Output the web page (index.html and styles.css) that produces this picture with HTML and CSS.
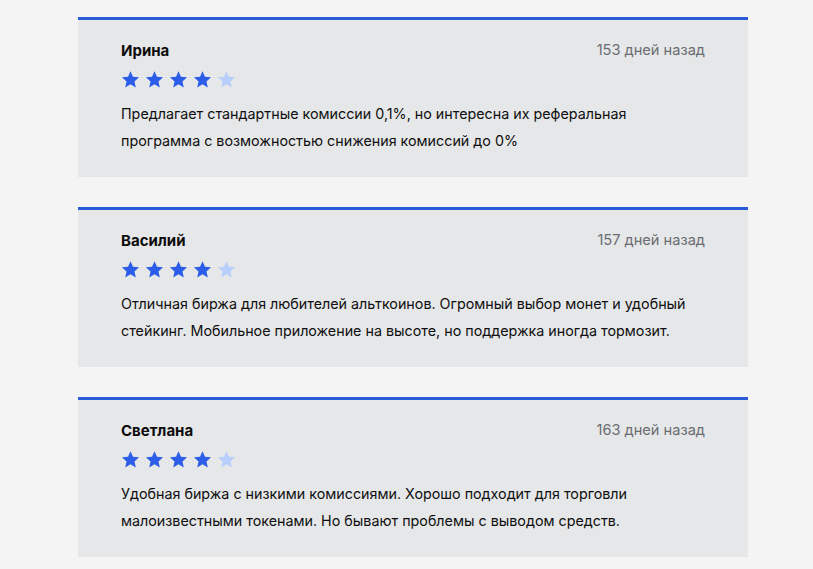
FILE: index.html
```html
<!DOCTYPE html>
<html lang="ru">
<head>
<meta charset="utf-8">
<link rel="stylesheet" href="styles.css">
</head>
<body>
<svg width="0" height="0" class="defs">
  <defs>
    <symbol id="star" viewBox="0 0 24 24">
      <path d="M12 1.5l3.1 7.1 7.7.7-5.8 5.1 1.7 7.6L12 18l-6.7 4 1.7-7.6-5.8-5.1 7.7-.7z"/>
    </symbol>
  </defs>
</svg>
<main class="list">
  <article class="review">
    <div class="head">
      <span class="name">Ирина</span>
      <span class="date">153 дней назад</span>
    </div>
    <div class="stars">
      <svg class="star on"><use href="#star"/></svg>
      <svg class="star on"><use href="#star"/></svg>
      <svg class="star on"><use href="#star"/></svg>
      <svg class="star on"><use href="#star"/></svg>
      <svg class="star off"><use href="#star"/></svg>
    </div>
    <p class="text">Предлагает стандартные комиссии 0,1%, но интересна их реферальная программа с возможностью снижения комиссий до 0%</p>
  </article>
  <article class="review">
    <div class="head">
      <span class="name">Василий</span>
      <span class="date">157 дней назад</span>
    </div>
    <div class="stars">
      <svg class="star on"><use href="#star"/></svg>
      <svg class="star on"><use href="#star"/></svg>
      <svg class="star on"><use href="#star"/></svg>
      <svg class="star on"><use href="#star"/></svg>
      <svg class="star off"><use href="#star"/></svg>
    </div>
    <p class="text">Отличная биржа для любителей альткоинов. Огромный выбор монет и удобный стейкинг. Мобильное приложение на высоте, но поддержка иногда тормозит.</p>
  </article>
  <article class="review">
    <div class="head">
      <span class="name">Светлана</span>
      <span class="date">163 дней назад</span>
    </div>
    <div class="stars">
      <svg class="star on"><use href="#star"/></svg>
      <svg class="star on"><use href="#star"/></svg>
      <svg class="star on"><use href="#star"/></svg>
      <svg class="star on"><use href="#star"/></svg>
      <svg class="star off"><use href="#star"/></svg>
    </div>
    <p class="text">Удобная биржа с низкими комиссиями. Хорошо подходит для торговли малоизвестными токенами. Но бывают проблемы с выводом средств.</p>
  </article>
</main>
</body>
</html>
```

FILE: styles.css
```css
html, body {
  margin: 0;
  padding: 0;
}
body {
  background: #f4f4f4;
  font-family: Inter, "Noto Sans", sans-serif;
  color: #111;
}
.defs {
  position: absolute;
  width: 0;
  height: 0;
}
.list {
  width: 670px;
  margin-left: 78px;
  padding-top: 17px;
  display: flex;
  flex-direction: column;
  gap: 30px;
}
.review {
  background: #e6e7e9;
  border-top: 3px solid #2b5bd9;
  padding: 20px 43px 21px 43px;
  height: 160px;
  box-sizing: border-box;
}
.head {
  display: flex;
  justify-content: space-between;
  align-items: center;
  height: 20px;
}
.name {
  font-size: 15px;
  font-weight: 700;
  color: #0d0d0d;
}
.date {
  font-size: 14.6px;
  color: #6b6d72;
}
.stars {
  display: flex;
  gap: 5px;
  margin-top: 10px;
  height: 18px;
}
.star {
  width: 19px;
  height: 19px;
}
.star.on { fill: #2b5de8; }
.star.off { fill: #b8cffc; }
.text {
  margin: 12px 0 0 0;
  font-size: 14.3px;
  line-height: 27px;
  color: #0f0f0f;
  max-width: 575px;
}
```
